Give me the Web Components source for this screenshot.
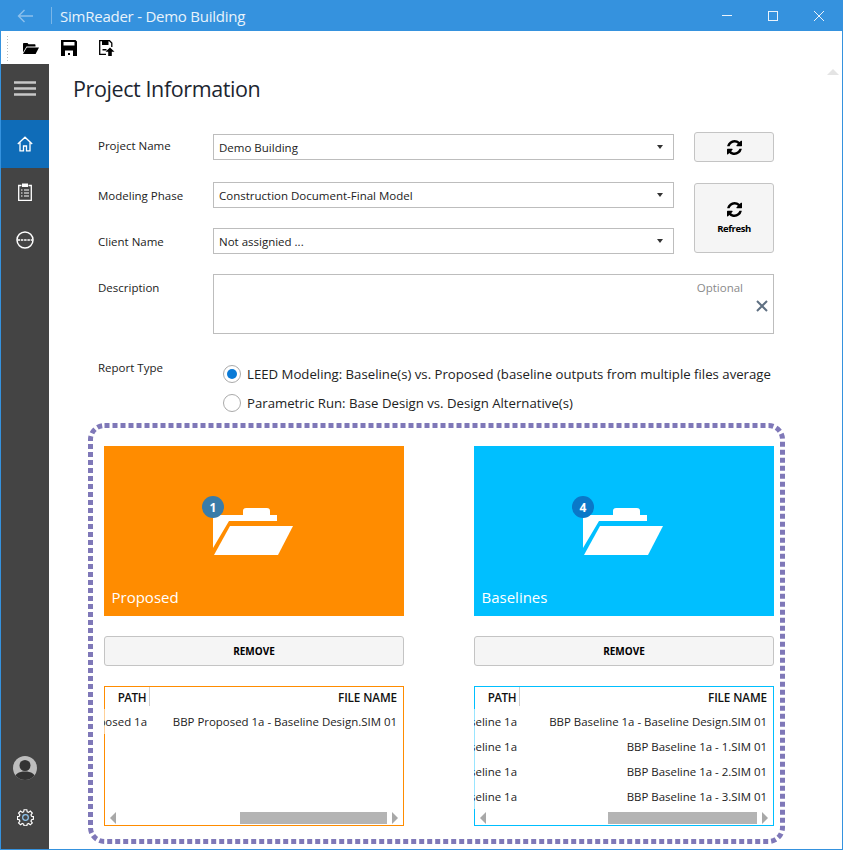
<!DOCTYPE html>
<html>
<head>
<meta charset="utf-8">
<title>SimReader</title>
<style>
  html, body { margin: 0; padding: 0; background: #fff; }
  body { font-family: "Open Sans", "Noto Sans", sans-serif; color: #222; }
</style>
</head>
<body>
<app-window>
  <title-bar slot="title" text="SimReader - Demo Building"></title-bar>
  <tool-bar slot="tools"></tool-bar>
  <side-nav slot="nav"></side-nav>
  <project-page slot="main"></project-page>
</app-window>

<script>
(function() {
  const FONT = '"Open Sans", "Noto Sans", sans-serif';

  const ICON_REFRESH = '<svg viewBox="0 0 1536 1536" width="100%" height="100%"><path fill="currentColor" d="M1511 928q0 5-1 7-64 268-268 434.5t-478 166.5q-146 0-282.5-55t-243.5-157l-129 129q-19 19-45 19t-45-19-19-45v-448q0-26 19-45t45-19h448q26 0 45 19t19 45-19 45l-137 137q71 66 161 102t187 36q134 0 250-65t186-179q11-17 53-117 8-23 30-23h192q13 0 22.5 9.5t9.5 22.5zm25-800v448q0 26-19 45t-45 19h-448q-26 0-45-19t-19-45 19-45l138-138q-148-137-349-137-134 0-250 65t-186 179q-11 17-53 117-8 23-30 23h-199q-13 0-22.5-9.5t-9.5-22.5v-7q65-268 270-434.5t480-166.5q146 0 284 55.5t245 156.5l130-129q19-19 45-19t45 19 19 45z"/></svg>';

  function define(name, css, html, init) {
    const template = document.createElement('template');
    template.innerHTML = `<style>${css}</style>${html}`;
    customElements.define(name, class extends HTMLElement {
      constructor() {
        super();
        this.attachShadow({ mode: 'open' });
        this.shadowRoot.appendChild(template.content.cloneNode(true));
      }
      connectedCallback() {
        if (init) init.call(this, this.shadowRoot);
      }
    });
  }

  define('app-window', `
    :host { display: block; width: 843px; height: 850px; box-sizing: border-box; overflow: hidden;
            border: 1px solid #3592de; border-top: 0; font-family: ${FONT}; color: #222; background: #fff; }
    .wrap { display: grid; grid-template-columns: 48px 1fr; grid-template-rows: 31px 33px 1fr; height: 100%; }
    .top, .bar { grid-column: 1 / 3; }
    ::slotted([slot=nav]) { height: 100%; }
  `, `
    <div class="wrap">
      <div class="top"><slot name="title"></slot></div>
      <div class="bar"><slot name="tools"></slot></div>
      <div class="nav"><slot name="nav"></slot></div>
      <div class="content"><slot name="main"></slot></div>
    </div>
  `);

  define('title-bar', `
    :host { display: flex; align-items: center; height: 31px; background: #3592de; color: #e8f2fb; }
    .back { width: 50px; display: flex; justify-content: center; box-sizing: border-box; padding-right: 3px; }
    .sep { width: 1px; height: 17px; background: #7ab6e8; }
    .text { margin-left: 8px; font-size: 15px; flex: 1; letter-spacing: -0.24px; }
    .btn { width: 46px; height: 31px; display: flex; align-items: center; justify-content: center; }
  `, `
    <div class="back">
      <svg width="16" height="14" viewBox="0 0 16 14"><path d="M7.5 1 1.5 7l6 6M1.5 7H16" fill="none" stroke="#8cc0ec" stroke-width="1.4"/></svg>
    </div>
    <div class="sep"></div>
    <div class="text" id="text"></div>
    <div class="btn"><svg width="10" height="10" viewBox="0 0 10 10"><path d="M0 4.500h10" stroke="#eaf3fb"/></svg></div>
    <div class="btn"><svg width="10" height="10" viewBox="0 0 10 10"><rect x=".5" y=".5" width="9" height="9" fill="none" stroke="#eaf3fb"/></svg></div>
    <div class="btn"><svg width="10" height="10" viewBox="0 0 10 10"><path d="M0 0l10 10M10 0 0 10" stroke="#eaf3fb"/></svg></div>
  `, function(root) {
    root.getElementById('text').textContent = this.getAttribute('text');
  });

  define('tool-bar', `
    :host { display: flex; align-items: center; height: 33px; background: #fff; box-sizing: border-box; }
    .grip { width: 3px; height: 26px; margin-left: 5px; background-image: radial-gradient(#bbb 0.8px, transparent 1px); background-size: 3px 3px; }
    .tool { display: flex; color: #000; }
    .open { margin-left: 14px; margin-top: 1px; }
    .save { margin-left: 22px; }
    .saveas { margin-left: 22px; }
  `, `
    <div class="grip"></div>
    <div class="tool open">
      <svg width="16" height="11" viewBox="0 0 16 11"><path fill="currentColor" d="M0 9.500V1.200C0 .5.400 0 1 0h3.500l1 1.300h6c.6 0 1 .4 1 1V3.500H3.500z"/><path fill="currentColor" d="M3.800 4.500H16L12.600 11H0z"/></svg>
    </div>
    <div class="tool save">
      <svg width="16" height="16" viewBox="0 0 16 16"><path fill="currentColor" fill-rule="evenodd" d="M0 0h14.500L16 1.500V16H0zM2.500 2v3.500h11V2zM4 10.500V16h8v-5.500zM7 13h2v2H7z"/></svg>
    </div>
    <div class="tool saveas">
      <svg width="16" height="16" viewBox="0 0 16 16"><path fill="none" stroke="currentColor" stroke-width="1.300" d="M7 14.300H.7V.7h9.800L12.800 3v4"/><path fill="currentColor" d="M3 1h6.500v4H3zM3.500 9h4v1.500h-4zM11 7.500l4.500 4.300h-2.700V16h-3.600v-4.200H6.500z"/></svg>
    </div>
  `);

  define('side-nav', `
    :host { display: flex; flex-direction: column; width: 48px; background: #444; color: #fff; }
    .burger { height: 56px; display: flex; align-items: center; justify-content: center; padding-bottom: 7px; box-sizing: border-box; }
    .item { height: 48px; display: flex; align-items: center; justify-content: center; }
    .item.on { background: #0f6cb8; }
    .space { flex: 1; }
    .avatar { height: 48px; display: flex; align-items: center; justify-content: center; }
    .gear { height: 50px; display: flex; align-items: center; justify-content: center; margin-bottom: 8px; }
  `, `
    <div class="burger">
      <svg width="22" height="15" viewBox="0 0 22 15"><path d="M0 1.500h22M0 7.500h22M0 13.500h22" stroke="#c8c8c8" stroke-width="2.400"/></svg>
    </div>
    <div class="item on">
      <svg width="16" height="16" viewBox="0 0 16 16"><path fill="none" stroke="#fff" stroke-width="1.300" d="M.8 8 8 1.200 15.200 8M3 6.500v8.300h3.500V10h3v4.800H13V6.500"/></svg>
    </div>
    <div class="item">
      <svg width="14" height="18" viewBox="0 0 14 18"><path fill="none" stroke="#fff" stroke-width="1.300" d="M3.500 2.500H.7v14.800h12.600V2.500h-2.800"/><path fill="#fff" d="M4 .5h6v3.500H4z"/><path stroke="#fff" stroke-width="1.200" d="M3 7h1.500M6 7h5M3 10h1.500M6 10h5M3 13h1.500M6 13h5"/></svg>
    </div>
    <div class="item">
      <svg width="18" height="18" viewBox="0 0 18 18"><circle cx="9" cy="9" r="8" fill="none" stroke="#fff" stroke-width="1.500"/><path d="M1.500 9h15" stroke="#fff" stroke-width="1.600" stroke-dasharray="2.500 .8"/></svg>
    </div>
    <div class="space"></div>
    <div class="avatar">
      <svg width="24" height="24" viewBox="0 0 24 24"><circle cx="12" cy="12" r="12" fill="#bdbdbd"/><clipPath id="c"><circle cx="12" cy="12" r="12"/></clipPath><g clip-path="url(#c)" fill="#333"><circle cx="12" cy="9.500" r="5.500"/><path d="M1 24c0-6 5-8.500 11-8.500S23 18 23 24z"/></g></svg>
    </div>
    <div class="gear">
      <svg width="17" height="17" viewBox="0 0 18 18"><path fill="none" stroke="#fff" stroke-width="1.300" d="M7.500 1h3l.4 2.300 1.500.6L14.300 2.500l2.100 2.100L15 6.500l.6 1.500 2 .4v3l-2 .4-.6 1.500 1.400 1.900-2.100 2.100-1.900-1.400-1.500.6-.4 2h-3l-.4-2-1.500-.6-1.900 1.400-2.100-2.100L3 13.300l-.6-1.500-2-.4v-3l2-.4.6-1.500-1.400-1.900 2.100-2.100 1.900 1.400 1.500-.6z" transform="translate(.1 -.2) scale(.98)"/><circle cx="9" cy="9" r="3" fill="none" stroke="#8fc4ec" stroke-width="1.300"/></svg>
    </div>
  `);

  define('combo-box', `
    :host { display: flex; align-items: center; box-sizing: border-box; height: 26px; border: 1px solid #bdbdbd; background: #fff; padding: 0 10px 0 5px; font-size: 11.500px; color: #222; }
    .v { flex: 1; white-space: nowrap; }
    .arrow { width: 0; height: 0; border: 3.500px solid transparent; border-top: 4px solid #333; border-bottom: 0; }
  `, `<div class="v"><slot></slot></div><div class="arrow"></div>`);

  define('push-button', `
    :host { display: flex; flex-direction: column; align-items: center; justify-content: center; box-sizing: border-box;
            border: 1px solid #c4c4c4; border-radius: 3px; background: #f5f5f5; color: #000; font-size: 10px; font-weight: 700; }
    .ic { display: none; width: 15px; height: 15px; }
    :host([icon]) .ic { display: block; }
    :host([icon]) .t { margin-top: 5px; font-size: 9.500px; letter-spacing: -0.4px; }
  `, `<div class="ic">${ICON_REFRESH}</div><div class="t"><slot></slot></div>`, function(root) {
    if (!this.textContent.trim()) root.querySelector('.t').style.display = 'none';
  });

  define('radio-option', `
    :host { display: flex; align-items: center; height: 29px; font-size: 13.200px; color: #222; white-space: nowrap; overflow: hidden; }
    .dot { flex: none; box-sizing: border-box; width: 18px; height: 18px; border-radius: 50%; border: 1px solid #aaa; background: #fff; margin-right: 6px; display: flex; align-items: center; justify-content: center; }
    :host([checked]) .dot::after { content: ""; width: 10px; height: 10px; border-radius: 50%; background: #0a7ad6; }
  `, `<div class="dot"></div><div><slot></slot></div>`);

  define('folder-tile', `
    :host { display: flex; flex-direction: column; box-sizing: border-box; height: 170px; padding-top: 62px; color: #fff; }
    .holder { position: relative; width: 80px; margin-left: 109px; height: 48px; }
    .badge { position: absolute; left: -11px; top: -12px; width: 22px; height: 22px; border-radius: 50%; font-size: 12px; font-weight: 700;
             display: flex; align-items: center; justify-content: center; color: #fff; background: var(--badge, #3a7ca8); }
    .label { margin-top: auto; padding: 0 0 9px 7.500px; font-size: 15px; }
  `, `
    <div class="holder">
      <svg width="80" height="48" viewBox="0 0 80 48"><path fill="#fff" d="M0 7h30V3q0-3 3-3h21q3 0 3 3v4h7v6H16L0 40z"/><path fill="#fff" d="M17 18h63L65 47H1z"/></svg>
      <div class="badge" id="b"></div>
    </div>
    <div class="label" id="l"></div>
  `, function(root) {
    root.getElementById('b').textContent = this.getAttribute('count');
    root.getElementById('l').textContent = this.getAttribute('label');
  });

  define('file-grid', `
    :host { display: flex; flex-direction: column; box-sizing: border-box; height: 140px; border: 1px solid var(--accent); font-size: 11.450px; color: #222; }
    .head { display: grid; grid-template-columns: 45px 1fr; height: 21px; font-size: 11.700px; font-weight: 600; letter-spacing: -0.1px; color: #111; flex: none; }
    .head div { text-align: right; line-height: 21px; padding-right: 3px; }
    .head div:first-child { border-right: 1px solid #d0d0d0; box-sizing: border-box; height: 19px; letter-spacing: -0.5px; }
    .head div:last-child { padding-right: 6px; }
    .rows { flex: 1; padding-top: 1px; display: flex; flex-direction: column; }
    .scroll { flex: none; height: 12px; margin-bottom: 1px; display: flex; align-items: center; padding: 0 5px; }
    .l { width: 0; height: 0; border: 6px solid transparent; border-left: 0; border-right: 6px solid #a8a8a8; }
    .r { width: 0; height: 0; border: 6px solid transparent; border-right: 0; border-left: 6px solid #a8a8a8; margin-left: 5px; }
    .thumb { margin-left: auto; height: 12px; background: #b4b4b4; width: var(--thumb); }
  `, `
    <div class="head"><div>PATH</div><div>FILE NAME</div></div>
    <div class="rows"><slot></slot></div>
    <div class="scroll"><div class="l"></div><div class="thumb"></div><div class="r"></div></div>
  `);

  define('file-row', `
    :host { display: grid; grid-template-columns: 46px 1fr; height: 25px; align-items: center; margin-left: -1px; background: rgba(255,255,255,.6); }
    .p, .f { display: flex; justify-content: flex-end; white-space: nowrap; overflow: hidden; }
    .p { padding-right: 3px; }
    .f { padding-right: 6px; }
  `, `<div class="p"><span id="p"></span></div><div class="f"><span id="f"></span></div>`, function(root) {
    root.getElementById('p').textContent = this.getAttribute('path');
    root.getElementById('f').textContent = this.getAttribute('name');
  });

  define('tile-column', `
    :host { display: flex; flex-direction: column; width: 300px; }
    .remove { margin-top: 20px; height: 30px; }
    .files { margin-top: 20px; }
  `, `
    <slot name="tile"></slot>
    <push-button class="remove">REMOVE</push-button>
    <div class="files"><slot name="files"></slot></div>
  `);

  define('project-page', `
    :host { display: block; position: relative; height: 786px; font-size: 11.500px; color: #222; }
    h1 { margin: 0; padding: 9px 0 0 24px; height: 59px; box-sizing: border-box; font-size: 21.500px; font-weight: 400; line-height: 32px; color: #1c2530; letter-spacing: -0.4px; }
    .thumb-up { position: absolute; right: 3px; top: 5px; width: 0; height: 0; border: 6px solid transparent; border-top: 0; border-bottom: 6px solid #e4e4e4; }
    .form { display: grid; grid-template-columns: 115px 461px 20px 80px; grid-template-rows: 30px 26px 26px 60px; row-gap: 20px; margin: 9px 0 0 49px; }
    .lbl { grid-column: 1; padding-top: 6px; line-height: 16px; color: #222; }
    combo-box { grid-column: 2; align-self: center; }
    .btn { grid-column: 4; }
    .big { grid-row: 2 / 4; margin: 1px 0; padding-top: 1px; }
    .desc { grid-column: 2 / 5; box-sizing: border-box; border: 1px solid #bdbdbd; display: grid; grid-template-columns: 1fr 30px; grid-template-rows: 18px 1fr; padding-top: 5px; }
    .opt { justify-self: end; color: #8a8a8a; line-height: 16px; }
    .x { grid-column: 2; grid-row: 2; padding: 2px 0 0 13px; }
    .report { display: grid; grid-template-columns: 115px 561px; margin: 20px 0 0 49px; height: 63px; }
    .report .lbl { padding-top: 6px; }
    .options { padding: 5px 0 0 10px; min-width: 0; }
    .frame { position: relative; box-sizing: border-box; width: 697px; height: 421px; margin: 6px 0 0 39px; padding: 23px 0 0 16px; display: flex; gap: 70px; }
    .frame svg { position: absolute; left: 0; top: 0; }
  `, `
    <h1>Project Information</h1>
    <div class="thumb-up"></div>
    <div class="form">
      <div class="lbl" style="grid-row:1">Project Name</div>
      <combo-box style="grid-row:1">Demo Building</combo-box>
      <push-button class="btn" style="grid-row:1" icon></push-button>

      <div class="lbl" style="grid-row:2">Modeling Phase</div>
      <combo-box style="grid-row:2">Construction Document-Final Model</combo-box>
      <push-button class="btn big" icon>Refresh</push-button>

      <div class="lbl" style="grid-row:3">Client Name</div>
      <combo-box style="grid-row:3">Not assignied ...</combo-box>

      <div class="lbl" style="grid-row:4">Description</div>
      <div class="desc" style="grid-row:4">
        <div class="opt">Optional</div>
        <div class="x"><svg width="12" height="12" viewBox="0 0 12 12"><path d="M1 1l10 10M11 1 1 11" stroke="#5f7082" stroke-width="2"/></svg></div>
      </div>
    </div>
    <div class="report">
      <div class="lbl">Report Type</div>
      <div class="options">
        <radio-option checked>LEED Modeling: Baseline(s) vs. Proposed (baseline outputs from multiple files average</radio-option>
        <radio-option>Parametric Run: Base Design vs. Design Alternative(s)</radio-option>
      </div>
    </div>
    <section class="frame">
      <svg width="697" height="421"><rect x="2.500" y="2.500" width="692" height="416" rx="14" fill="none" stroke="#7f78b8" stroke-width="5" stroke-dasharray="5 3"/></svg>
      <tile-column>
        <folder-tile slot="tile" label="Proposed" count="1" style="background:#ff8c00;--badge:#3a7ca8;"></folder-tile>
        <file-grid slot="files" style="--accent:#ff8c00;--thumb:147px;">
          <file-row path="BBP Proposed 1a" name="BBP Proposed 1a - Baseline Design.SIM 01"></file-row>
        </file-grid>
      </tile-column>
      <tile-column>
        <folder-tile slot="tile" label="Baselines" count="4" style="background:#00bfff;--badge:#0a78c8;"></folder-tile>
        <file-grid slot="files" style="--accent:#00bfff;--thumb:149px;">
          <file-row path="BBP Baseline 1a" name="BBP Baseline 1a - Baseline Design.SIM 01"></file-row>
          <file-row path="BBP Baseline 1a" name="BBP Baseline 1a - 1.SIM 01"></file-row>
          <file-row path="BBP Baseline 1a" name="BBP Baseline 1a - 2.SIM 01"></file-row>
          <file-row path="BBP Baseline 1a" name="BBP Baseline 1a - 3.SIM 01"></file-row>
        </file-grid>
      </tile-column>
    </section>
  `);
})();
</script>
</body>
</html>
